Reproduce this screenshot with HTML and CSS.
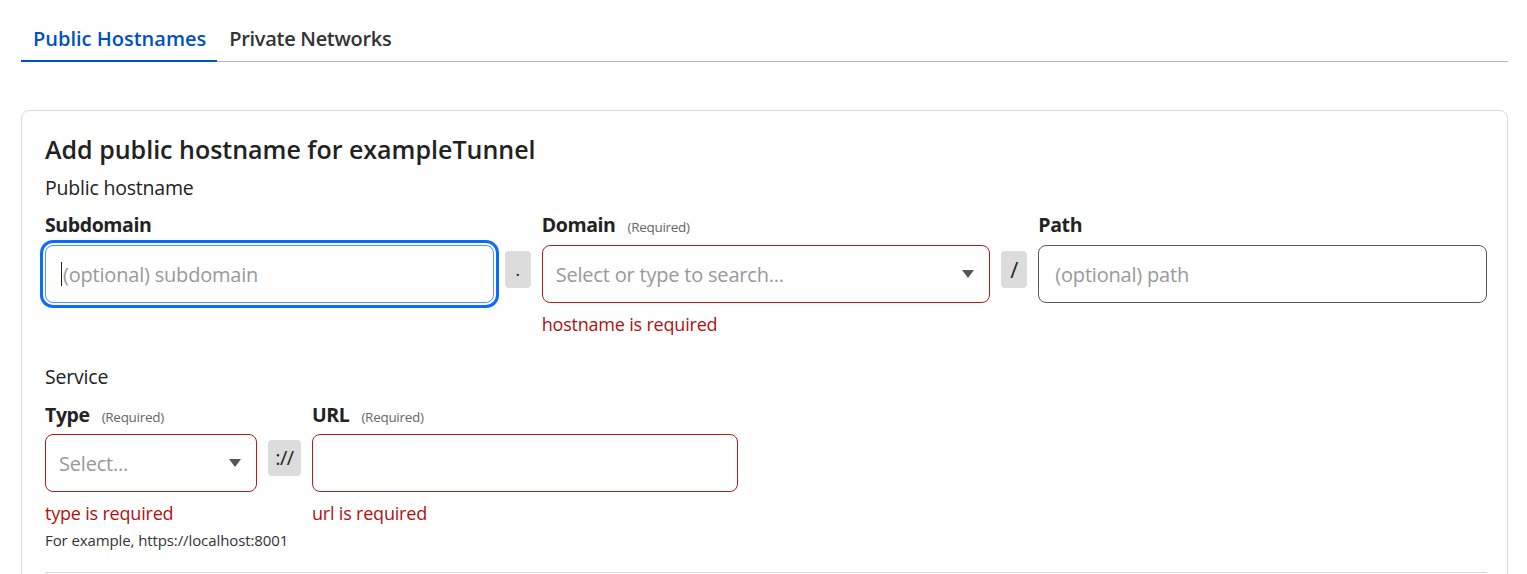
FILE: index.html
```html
<!DOCTYPE html>
<html lang="en">
<head>
<meta charset="utf-8">
<title>Public Hostnames</title>
<link rel="stylesheet" href="styles.css">
</head>
<body>
<div class="page">
  <nav class="tabs">
    <div class="tab active">Public Hostnames</div>
    <div class="tab">Private Networks</div>
  </nav>

  <section class="card">
    <h2 class="title">Add public hostname for exampleTunnel</h2>

    <div class="group-label">Public hostname</div>
    <div class="row row-host">
      <div class="field">
        <div class="label"><b>Subdomain</b></div>
        <div class="control focused"><span class="caret"></span><span class="ph">(optional) subdomain</span></div>
      </div>
      <div class="addon">.</div>
      <div class="field">
        <div class="label"><b>Domain</b><span class="req">(Required)</span></div>
        <div class="control error"><span class="ph">Select or type to search...</span><span class="arrow"></span></div>
        <div class="err">hostname is required</div>
      </div>
      <div class="addon slash">/</div>
      <div class="field">
        <div class="label"><b>Path</b></div>
        <div class="control"><span class="ph">(optional) path</span></div>
      </div>
    </div>

    <div class="group-label service">Service</div>
    <div class="row row-service">
      <div class="field type">
        <div class="label"><b>Type</b><span class="req">(Required)</span></div>
        <div class="control error"><span class="ph">Select...</span><span class="arrow"></span></div>
        <div class="err">type is required</div>
        <div class="hint">For example, https://localhost:8001</div>
      </div>
      <div class="addon proto">://</div>
      <div class="field url">
        <div class="label"><b>URL</b><span class="req">(Required)</span></div>
        <div class="control error"></div>
        <div class="err">url is required</div>
      </div>
    </div>

    <hr class="divider">
  </section>
</div>
</body>
</html>
```

FILE: styles.css
```css
* { box-sizing: border-box; }
html, body { margin: 0; padding: 0; background: #fff; }
body {
  font-family: "Open Sans", "Noto Sans", sans-serif;
  color: #222;
  overflow: hidden;
}
.page {
  padding: 19px 19px 0 21px;
}
.tabs {
  display: flex;
  border-bottom: 1px solid #b9b9b9;
}
.tab {
  padding: 4px 11px 5px 12px;
  font-size: 20px;
  line-height: 32px;
  font-weight: 600;
  color: #333;
  margin-bottom: -1px;
  border-bottom: 2px solid transparent;
}
.tab + .tab { letter-spacing: -0.3px; }
.tab.active {
  color: #0051c3;
  border-bottom-color: #0051c3;
}
.card {
  margin-top: 48px;
  border: 1px solid #d9d9d9;
  border-radius: 8px;
  padding: 22px 20px 0 23px;
  height: 520px;
}
.title {
  margin: 0;
  font-size: 25px;
  line-height: 32px;
  font-weight: 600;
  color: #222;
}
.group-label {
  margin-top: 10px;
  font-size: 19.5px;
  line-height: 26px;
  color: #222;
  letter-spacing: -0.2px;
}
.group-label.service { margin-top: 28px; }
.row {
  display: flex;
  align-items: flex-start;
  gap: 11px;
}
.row-host { margin-top: 11px; }
.row-host .field { flex: 1 1 0; }
.row-service { margin-top: 12px; }
.field { display: flex; flex-direction: column; }
.field.type { width: 212px; }
.field.url { width: 426px; }
.label {
  height: 26px;
  font-size: 19.5px;
  line-height: 26px;
  display: flex;
  align-items: baseline;
  letter-spacing: -0.4px;
}
.label b { font-weight: 700; color: #222; }
.req {
  margin-left: 12px;
  font-size: 13.5px;
  line-height: 18px;
  color: #666;
  letter-spacing: -0.3px;
}
.control {
  position: relative;
  margin-top: 7px;
  height: 58px;
  border: 1px solid #595959;
  border-radius: 8px;
  display: flex;
  align-items: center;
  padding: 0 16px;
  font-size: 20px;
  background: #fff;
}
.control.error { border-color: #b21b1b; padding-left: 13px; }
.control.focused {
  border-color: #4d94ff;
  box-shadow: 0 0 0 2px #fff, 0 0 0 5px #0a6cff;
  padding-left: 15px;
}
.row-service .control { margin-top: 6px; }
.ph { color: #999; letter-spacing: -0.2px; }
.caret {
  width: 1px;
  height: 24px;
  background: #222;
  margin-right: 1px;
}
.arrow {
  position: absolute;
  right: 15px;
  top: 50%;
  margin-top: -4px;
  width: 0;
  height: 0;
  border-left: 6px solid transparent;
  border-right: 6px solid transparent;
  border-top: 8px solid #555;
}
.addon {
  margin-top: 39px;
  width: 26px;
  height: 37px;
  background: #dcdcdc;
  border-radius: 4px;
  font-size: 19px;
  line-height: 37px;
  text-align: center;
  color: #222;
  flex: none;
}
.addon.slash { font-size: 22px; }
.addon.proto {
  width: 33px;
  height: 36px;
  line-height: 36px;
  margin-top: 38px;
  font-size: 20px;
  letter-spacing: -0.5px;
}
.err {
  margin-top: 9px;
  font-size: 18px;
  line-height: 24px;
  color: #b20f0f;
  letter-spacing: -0.2px;
}
.hint {
  margin-top: 5px;
  font-size: 15px;
  line-height: 20px;
  color: #333;
  white-space: nowrap;
  letter-spacing: -0.1px;
}
.divider {
  margin: 22px 0 0 0;
  border: 0;
  border-top: 1px solid #d9d9d9;
}
```
